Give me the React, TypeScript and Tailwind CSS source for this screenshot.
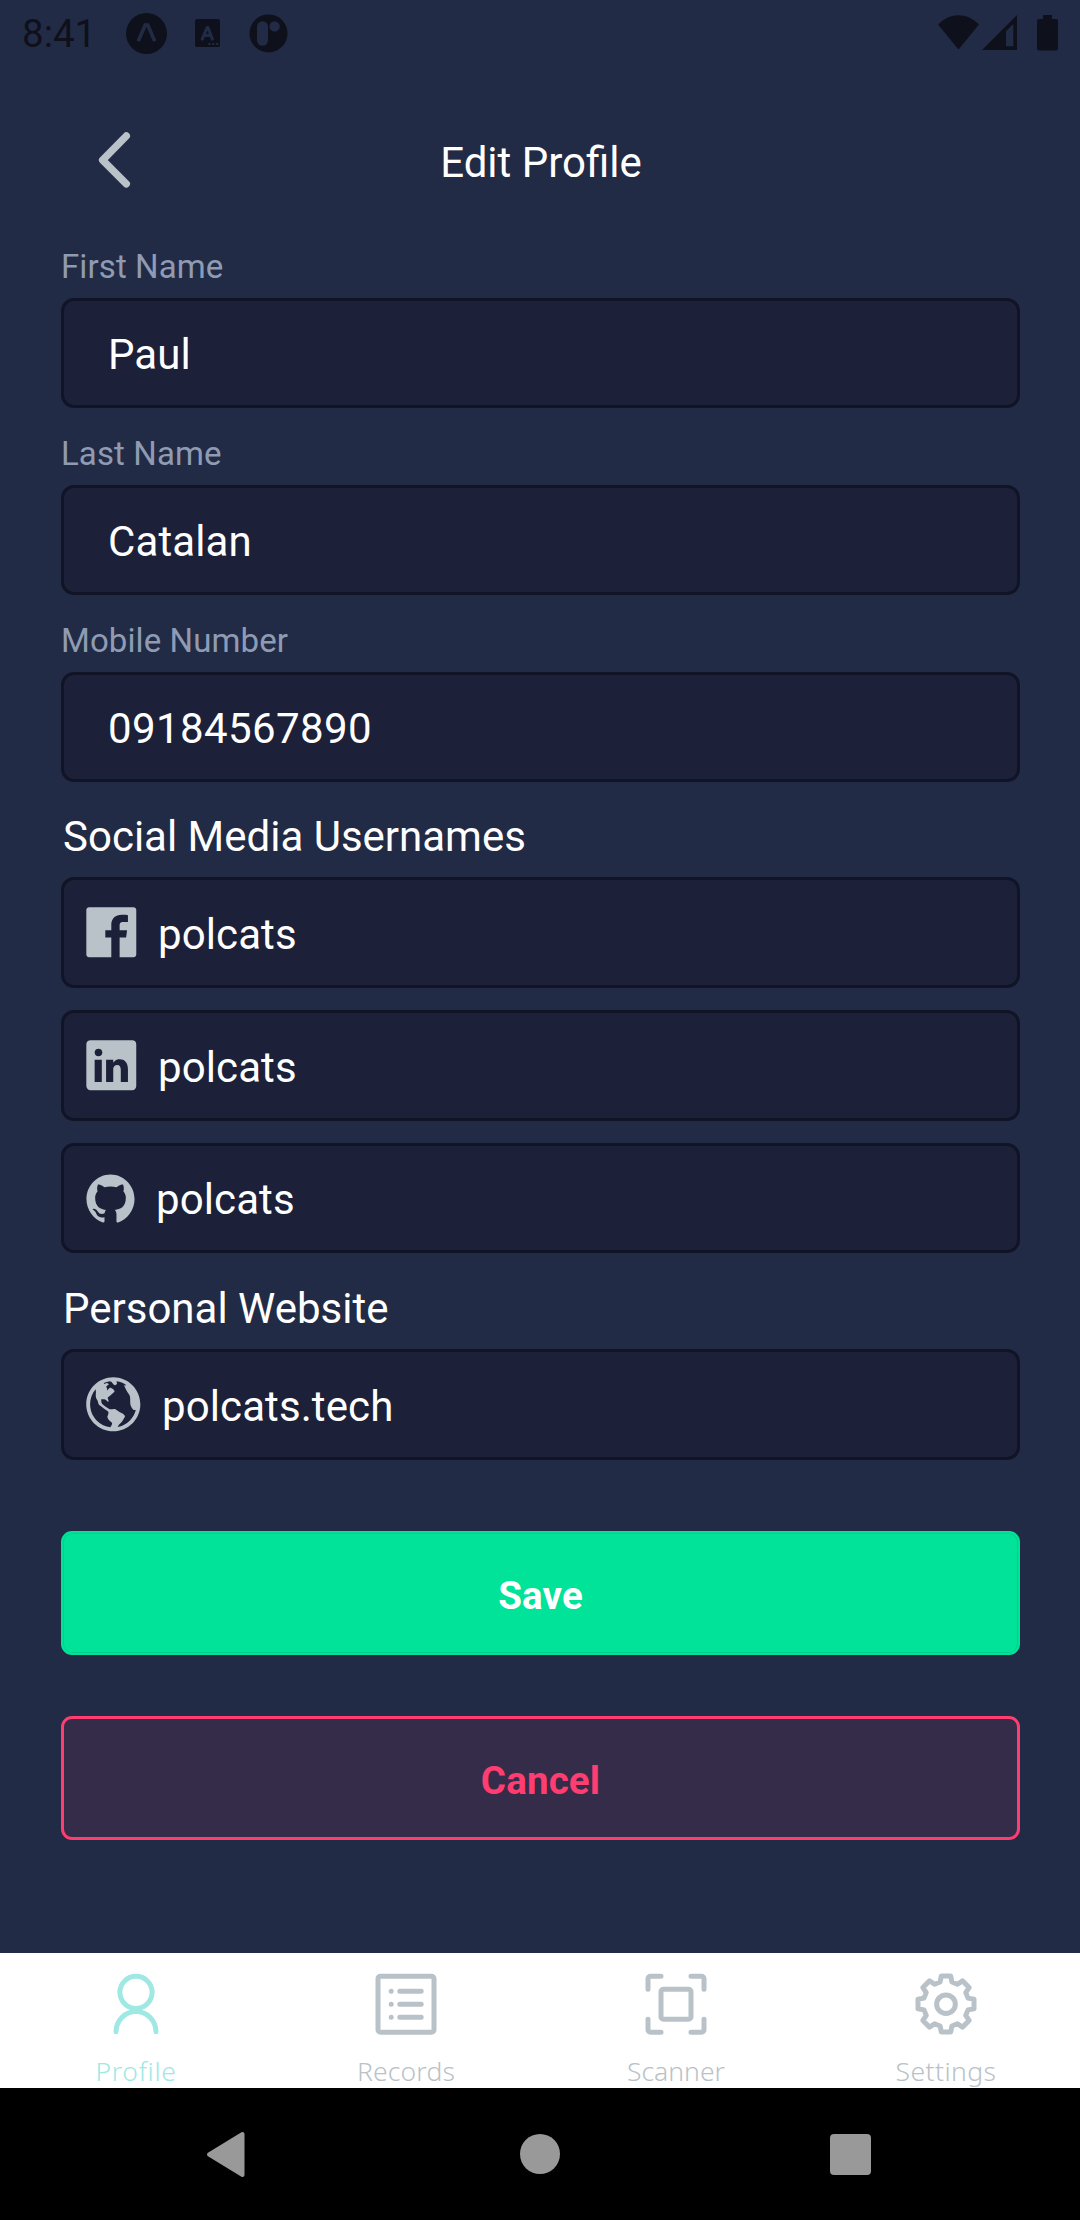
import type { ReactNode } from "react";
import { IoLogoFacebook, IoLogoGithub, IoLogoLinkedin, IoMdGlobe } from "react-icons/io";

function StatusBar() {
  return (
    <div className="flex h-[66px] shrink-0 items-start text-[#0e101b]">
      <span className="ml-[22px] w-[101px] pt-[9px] text-[38.5px] leading-[50px]">8:41</span>
      <svg className="mt-[13px] ml-[3px]" width="41" height="41" viewBox="0 0 41 41">
        <circle cx="20.5" cy="20.5" r="20.5" fill="currentColor" />
        <path d="M12.2 28.3L19.2 12H21.8L28.8 28.3" fill="none" stroke="#222b45" strokeWidth="3.6" />
      </svg>
      <svg className="mt-[19px] ml-[28px]" width="25" height="28" viewBox="0 0 25 28">
        <rect width="25" height="28" rx="2" fill="currentColor" />
        <path d="M7.2 20.2L12.2 8.4H12.9L17.4 20.2M9.2 16.6H15.8" fill="none" stroke="#222b45" strokeWidth="3" strokeLinecap="round" strokeLinejoin="round" />
        <path d="M13.5 25H15.5M17.3 25H19.3M21.2 25H23.2" stroke="#222b45" strokeWidth="2" />
      </svg>
      <svg className="mt-[14px] ml-[29px]" width="39" height="39" viewBox="0 0 39 39">
        <circle cx="19.5" cy="19.4" r="19" fill="currentColor" />
        <rect x="8" y="7.2" width="11" height="24.6" rx="5.5" fill="#222b45" />
        <circle cx="25.6" cy="12.4" r="5.2" fill="#222b45" />
      </svg>
      <svg className="mt-[15px] ml-auto" width="42" height="35" viewBox="0 0 42 35">
        <path d="M0 9.5C12 -3 29 -3 41 9.5L20.5 34.5Z" fill="currentColor" />
      </svg>
      <svg className="mt-[15px] ml-[2px]" width="35" height="35" viewBox="0 0 35 35">
        <path fillRule="evenodd" d="M35 0V35H0ZM31.3 9L24 16.2V31.2H31.3Z" fill="currentColor" />
      </svg>
      <svg className="mt-[15px] mr-[22px] ml-[20px]" width="21" height="36" viewBox="0 0 21 36">
        <path d="M6 0H15V4H19A2 2 0 0 1 21 6V33.5A2 2 0 0 1 19 35.5H2A2 2 0 0 1 0 33.5V6A2 2 0 0 1 2 4H6Z" fill="currentColor" />
      </svg>
    </div>
  );
}

function Header() {
  return (
    <header className="grid h-[178px] shrink-0 grid-cols-[270px_1fr_270px] items-start">
      <svg className="mt-[65px] ml-[98px]" width="33" height="58" viewBox="0 0 33 58">
        <path d="M28.3 5L4.6 29.1L28.3 52.8" fill="none" stroke="#b8c2c8" strokeWidth="7.4" strokeLinecap="round" strokeLinejoin="round" />
      </svg>
      <h1 className="mt-[72px] ml-[2px] text-center text-[42px] leading-[50px] text-white">Edit Profile</h1>
    </header>
  );
}

function Field({ label, value, tracking = "tracking-[0.1px]" }: { label: string; value: string; tracking?: string }) {
  return (
    <div className="mb-[23px]">
      <div className="mb-2 text-[33px] leading-[46px] tracking-[0.1px] text-[#8f9bb3]">{label}</div>
      <div className={`flex h-[110px] items-center rounded-[13px] border-3 border-[#101426] bg-[#1c2139] px-[44px] pt-[2px] text-[42px] text-white ${tracking}`}>
        {value}
      </div>
    </div>
  );
}

function IconField({ icon, value, iconClass, className = "h-[111px]" }: { icon: ReactNode; value: string; iconClass: string; className?: string }) {
  return (
    <div className={`flex items-center rounded-[13px] border-3 border-[#101426] bg-[#1c2139] pl-[22px] ${className}`}>
      <span className={`flex items-center justify-center text-[#b8c2c8] ${iconClass}`}>{icon}</span>
      <span className="ml-[22px] pt-[4px] text-[42px] leading-[50px] tracking-[0.1px] text-white">{value}</span>
    </div>
  );
}

// Eight-toothed outline centred on (31, 31)
const gear =
  "M" +
  Array.from({ length: 8 }, (_, i) => i * 45 - 90)
    .flatMap((a) => [
      [a - 15, 22.8],
      [a - 9.5, 28.4],
      [a + 9.5, 28.4],
      [a + 15, 22.8],
    ])
    .map(([a, r]) => {
      const t = (a * Math.PI) / 180;
      return `${(31 + r * Math.cos(t)).toFixed(2)} ${(31 + r * Math.sin(t)).toFixed(2)}`;
    })
    .join("L") +
  "Z";

const tabs = [
  {
    name: "Profile",
    color: "text-[#9fe8e3]",
    tracking: "tracking-[0.7px]",
    icon: (
      <>
        <circle cx="31" cy="19.3" r="16.1" />
        <path d="M11 58.8A20 20.3 0 0 1 51 58.8" />
      </>
    ),
  },
  {
    name: "Records",
    color: "text-[#b8c2c8]",
    tracking: "tracking-[0.15px]",
    icon: (
      <>
        <rect x="3" y="3.2" width="56" height="56" rx="2.5" />
        <path d="M16.2 18.2H16.21M24.8 18.2H46.2M16.2 31.2H16.21M24.8 31.2H46.2M16.2 44.2H16.21M24.8 44.2H46.2" />
      </>
    ),
  },
  {
    name: "Scanner",
    color: "text-[#b8c2c8]",
    tracking: "tracking-normal",
    icon: (
      <>
        <path d="M16 3.2H5.5A2.5 2.5 0 0 0 3 5.7V16.2M46 3.2H56.5A2.5 2.5 0 0 1 59 5.7V16.2M16 59.2H5.5A2.5 2.5 0 0 1 3 56.7V46.2M46 59.2H56.5A2.5 2.5 0 0 0 59 56.7V46.2" />
        <rect x="16" y="16.2" width="30" height="30" rx="2.5" />
      </>
    ),
  },
  {
    name: "Settings",
    color: "text-[#b8c2c8]",
    tracking: "tracking-[0.45px]",
    icon: (
      <>
        <circle cx="31" cy="31.2" r="9.3" />
        <path d={gear} />
      </>
    ),
  },
];

function TabBar() {
  return (
    <nav className="grid h-[135px] shrink-0 grid-cols-4 bg-white">
      {tabs.map((t) => (
        <div key={t.name} className={`flex flex-col items-center ${t.color}`}>
          <svg className="mt-5 ml-px" width="62" height="62" viewBox="0 0 62 62" fill="none" stroke="currentColor" strokeWidth="5" strokeLinecap="round" strokeLinejoin="round">
            {t.icon}
          </svg>
          <span className={`mt-[20px] ml-[2px] font-['Noto_Sans',sans-serif] text-[26.5px] leading-[33px] font-light ${t.tracking}`}>{t.name}</span>
        </div>
      ))}
    </nav>
  );
}

function SystemNav() {
  return (
    <div className="grid h-[132px] shrink-0 grid-cols-[226px_628px_1fr] bg-black text-[#999999]">
      <svg className="mt-[43px] ml-[206px]" width="40" height="47" viewBox="0 0 40 47">
        <path d="M3 23.5L36.5 3V44Z" fill="currentColor" stroke="currentColor" strokeWidth="4" strokeLinejoin="round" />
      </svg>
      <div className="mt-[46px] ml-[294px] size-10 rounded-full bg-[#999999]" />
      <div className="mt-[46px] -ml-6 size-[41px] rounded-[4px] bg-[#999999]" />
    </div>
  );
}

export default function App() {
  return (
    <div className="flex h-[2220px] w-[1080px] flex-col bg-[#222b45] font-['Roboto',sans-serif]">
      <StatusBar />
      <Header />
      <main className="flex flex-1 flex-col pr-[60px] pl-[61px]">
        <Field label="First Name" value="Paul" />
        <Field label="Last Name" value="Catalan" />
        <Field label="Mobile Number" value="09184567890" tracking="tracking-[0.4px]" />
        <h2 className="mt-[8px] mb-4 ml-[2px] text-[42px] leading-[48px] text-white">Social Media Usernames</h2>
        <div className="flex flex-col gap-[22px]">
          <IconField icon={<IoLogoFacebook size={66.6} className="shrink-0" />} value="polcats" iconClass="size-[50px]" />
          <IconField icon={<IoLogoLinkedin size={66.6} className="shrink-0" />} value="polcats" iconClass="size-[50px]" />
          <IconField icon={<IoLogoGithub size={55} className="shrink-0" />} value="polcats" iconClass="h-[50px] w-[48px]" className="h-[110px]" />
        </div>
        <h2 className="mt-8 mb-4 ml-[2px] text-[42px] leading-[48px] text-white">Personal Website</h2>
        <IconField icon={<IoMdGlobe size={66.6} className="shrink-0" />} value="polcats.tech" iconClass="size-[54px]" />
        <button className="mt-[71px] h-[124px] rounded-[11px] border-2 border-[#00e399] bg-[#00e399] pt-[5px] text-[38.5px] font-bold tracking-[0.15px] text-white shadow-[inset_0_0_0_1px_#03cc8d]">
          Save
        </button>
        <button className="mt-[61px] h-[124px] rounded-[11px] border-3 border-[#ff3d71] bg-[#342c49] pt-[5px] text-[38.5px] font-bold tracking-[0.15px] text-[#ff3d71]">
          Cancel
        </button>
      </main>
      <TabBar />
      <SystemNav />
    </div>
  );
}
